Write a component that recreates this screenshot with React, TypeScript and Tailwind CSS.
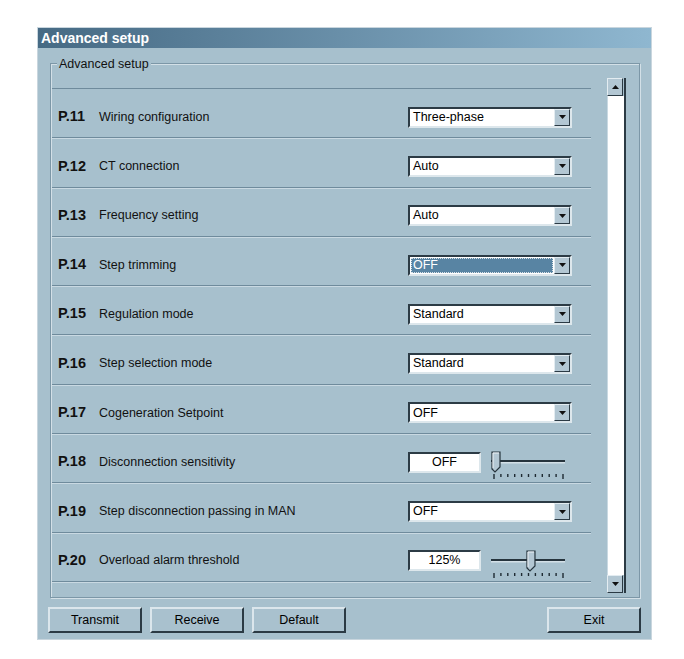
import React from "react";

type Row =
  | { code: string; label: string; kind: "select"; value: string; focused?: boolean }
  | { code: string; label: string; kind: "slider"; value: string; pos: number };

const rows: Row[] = [
  { code: "P.11", label: "Wiring configuration", kind: "select", value: "Three-phase" },
  { code: "P.12", label: "CT connection", kind: "select", value: "Auto" },
  { code: "P.13", label: "Frequency setting", kind: "select", value: "Auto" },
  { code: "P.14", label: "Step trimming", kind: "select", value: "OFF", focused: true },
  { code: "P.15", label: "Regulation mode", kind: "select", value: "Standard" },
  { code: "P.16", label: "Step selection mode", kind: "select", value: "Standard" },
  { code: "P.17", label: "Cogeneration Setpoint", kind: "select", value: "OFF" },
  { code: "P.18", label: "Disconnection sensitivity", kind: "slider", value: "OFF", pos: 0 },
  { code: "P.19", label: "Step disconnection passing in MAN", kind: "select", value: "OFF" },
  { code: "P.20", label: "Overload alarm threshold", kind: "slider", value: "125%", pos: 0.53 },
];

const font = { fontFamily: '"Liberation Sans", Arial, sans-serif' };

function ArrowBtn({ up }: { up?: boolean }) {
  return (
    <div className="flex h-full w-[16px] items-center justify-center border border-t-[#e3ecf1] border-l-[#e3ecf1] border-b-[#2b3a44] border-r-[#2b3a44] bg-[#b3c7d3]">
      <svg width="7" height="4" viewBox="0 0 7 4">
        {up ? <path d="M0 4 L3.5 0 L7 4 Z" fill="#111" /> : <path d="M0 0 L7 0 L3.5 4 Z" fill="#111" />}
      </svg>
    </div>
  );
}

function Select({ value, focused }: { value: string; focused?: boolean }) {
  return (
    <div className="flex h-[21px] w-[164px] border-2 border-t-[#2c3b45] border-l-[#2c3b45] border-b-[#dde7ec] border-r-[#dde7ec] bg-white">
      <div className="flex flex-1 items-center p-[1px]">
        {focused ? (
          <div className="flex h-full w-full items-center border border-dotted border-[#d8e2e8] bg-[#5884a3] pl-[1px] text-white">
            {value}
          </div>
        ) : (
          <span className="pl-[2px] text-black">{value}</span>
        )}
      </div>
      <ArrowBtn />
    </div>
  );
}

function Slider({ value, pos }: { value: string; pos: number }) {
  const x = 7 + pos * 66;
  const ticks = Array.from({ length: 11 }, (_, i) => 5 + i * 6.9);
  return (
    <div className="flex items-center">
      <div className="flex h-[21px] w-[73px] items-center justify-center border-2 border-t-[#2c3b45] border-l-[#2c3b45] border-b-[#dde7ec] border-r-[#dde7ec] bg-white text-black">
        {value}
      </div>
      <svg width="80" height="34" viewBox="0 0 80 34" className="ml-[8px]">
        <line x1="2" y1="17.5" x2="76" y2="17.5" stroke="#d3e0e7" strokeWidth="2" />
        <line x1="2" y1="16" x2="76" y2="16" stroke="#26343d" strokeWidth="2" />
        <path
          d={`M${x - 4} 7 L${x + 4} 7 L${x + 4} 22 L${x - 1} 27 L${x - 4} 24 Z`}
          fill="#b3c7d3"
          stroke="#26343d"
          strokeWidth="1.2"
        />
        <path d={`M${x - 3} 23 L${x - 3} 8 L${x + 3} 8`} fill="none" stroke="#eef3f6" strokeWidth="1" />
        {ticks.map((t, i) => (
          <line key={i} x1={t} y1="29" x2={t} y2={i === 0 || i === 10 ? 34 : 32} stroke="#1e2a32" strokeWidth="1.4" />
        ))}
      </svg>
    </div>
  );
}

function Button({ label }: { label: string }) {
  return (
    <div className="flex h-[26px] w-[94px] items-center justify-center border-2 border-t-[#dbe6ec] border-l-[#dbe6ec] border-b-[#2b3a44] border-r-[#2b3a44] bg-[#a9c1ce] text-[12.5px] text-black">
      {label}
    </div>
  );
}

export default function App() {
  return (
    <div className="min-h-[659px] bg-white pl-[37px] pt-[27px]" style={font}>
      <div className="flex h-[613px] w-[615px] flex-col border border-[#c9d6de] bg-[#a7c0cd] text-[12.5px]">
        <div className="flex h-[20px] items-center bg-gradient-to-r from-[#466a84] to-[#8fb7d0] pl-[3px] text-[14px] font-bold text-white">
          Advanced setup
        </div>
        <div className="relative ml-[12px] mr-[11px] mt-[15px] h-[535px] border border-[#7c97a7] shadow-[inset_1px_1px_0_#d3e0e7,1px_1px_0_#d3e0e7]">
          <span className="absolute -top-[9px] left-[6px] bg-[#a7c0cd] px-[2px] text-[12.5px] text-[#111]">
            Advanced setup
          </span>
          <div className="flex">
            <div className="ml-[1px] mt-[24px] w-[539px]">
              <div className="border-t border-[#6f8b9c] shadow-[inset_0_1px_0_#c9d9e2]" />
              {rows.map((r) => (
                <div
                  key={r.code}
                  className="flex h-[49.3px] items-center border-b border-[#6f8b9c] pt-[8px] shadow-[0_1px_0_#c9d9e2]"
                >
                  <div className="flex w-[356px] items-center pl-[6px] text-[#111]">
                    <span className="w-[41px] text-[14.5px] font-bold">{r.code}</span>
                    <span>{r.label}</span>
                  </div>
                  {r.kind === "select" ? (
                    <Select value={r.value} focused={r.focused} />
                  ) : (
                    <Slider value={r.value} pos={r.pos} />
                  )}
                </div>
              ))}
            </div>
            <div className="ml-[16px] mt-[14px] flex h-[515px] w-[19px] flex-col border-r-2 border-[#2b3a44]">
              <div className="h-[18px]">
                <ArrowBtn up />
              </div>
              <div className="flex-1 border-l border-[#c9d9e2] bg-white" />
              <div className="h-[18px]">
                <ArrowBtn />
              </div>
            </div>
          </div>
        </div>
        <div className="ml-[10px] mr-[10px] mt-[9px] flex gap-[8px]">
          <Button label="Transmit" />
          <Button label="Receive" />
          <Button label="Default" />
          <div className="flex-1" />
          <Button label="Exit" />
        </div>
      </div>
    </div>
  );
}
